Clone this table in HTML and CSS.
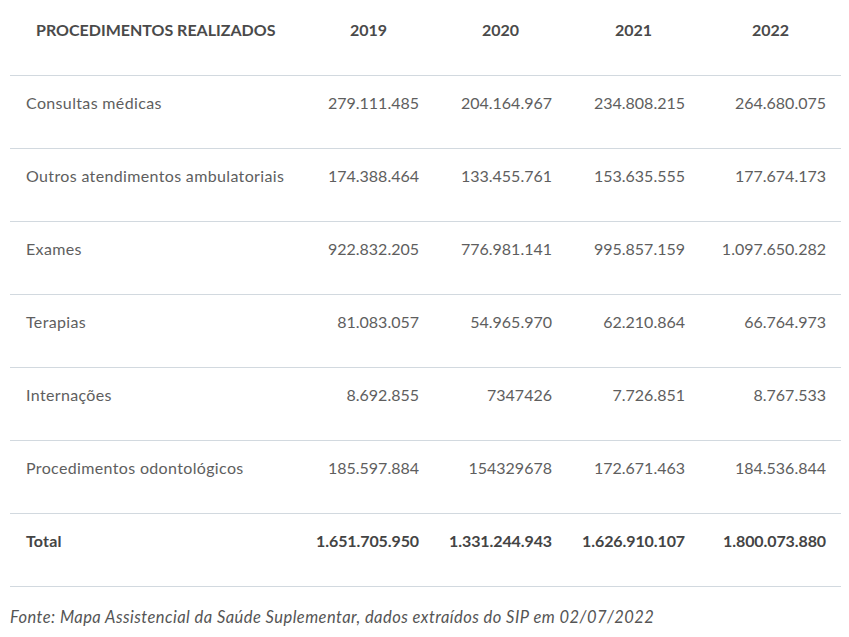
FILE: index.html
```html
<!DOCTYPE html>
<html lang="pt-BR">
<head>
<meta charset="utf-8">
<link rel="stylesheet" href="styles.css">
</head>
<body>
<div class="wrap">
<table class="data">
  <colgroup>
    <col class="c-label"><col class="c-num2"><col class="c-num"><col class="c-num"><col class="c-num5">
  </colgroup>
  <thead>
    <tr><th class="lbl">PROCEDIMENTOS REALIZADOS</th><th>2019</th><th>2020</th><th>2021</th><th>2022</th></tr>
  </thead>
  <tbody>
    <tr><td class="lbl">Consultas médicas</td><td>279.111.485</td><td>204.164.967</td><td>234.808.215</td><td>264.680.075</td></tr>
    <tr><td class="lbl">Outros atendimentos ambulatoriais</td><td>174.388.464</td><td>133.455.761</td><td>153.635.555</td><td>177.674.173</td></tr>
    <tr><td class="lbl">Exames</td><td>922.832.205</td><td>776.981.141</td><td>995.857.159</td><td>1.097.650.282</td></tr>
    <tr><td class="lbl">Terapias</td><td>81.083.057</td><td>54.965.970</td><td>62.210.864</td><td>66.764.973</td></tr>
    <tr><td class="lbl">Internações</td><td>8.692.855</td><td>7347426</td><td>7.726.851</td><td>8.767.533</td></tr>
    <tr><td class="lbl">Procedimentos odontológicos</td><td>185.597.884</td><td>154329678</td><td>172.671.463</td><td>184.536.844</td></tr>
    <tr class="total"><td class="lbl">Total</td><td>1.651.705.950</td><td>1.331.244.943</td><td>1.626.910.107</td><td>1.800.073.880</td></tr>
  </tbody>
</table>
<p class="source">Fonte: Mapa Assistencial da Saúde Suplementar, dados extraídos do SIP em 02/07/2022</p>
</div>
</body>
</html>
```
FILE: styles.css
```css
html, body { margin: 0; padding: 0; background: #fff; }
body { font-family: Lato, "Open Sans", sans-serif; color: #555; }
.wrap { padding: 0 8px 0 10px; }
.data { width: 831px; border-collapse: collapse; table-layout: fixed; }
.c-label { width: 293px; }
.c-num2 { width: 131px; }
.c-num { width: 133px; }
.c-num5 { width: 141px; }
.data th {
  height: 75px; box-sizing: border-box; padding: 21px 15px 36px;
  font-size: 16px; font-weight: 700; color: #4a4a4a; text-align: center;
  border-bottom: 1px solid #d2d9df; line-height: 18px; vertical-align: top;
}
.data th.lbl { text-align: left; padding-left: 26px; padding-right: 0; }
.data td {
  height: 73px; box-sizing: border-box; padding: 17px 15px 0 0;
  font-size: 16px; font-weight: 400; color: #5e5e5e; text-align: right;
  border-bottom: 1px solid #d2d9df; line-height: 20px; vertical-align: top;
}
.data td.lbl { text-align: left; padding-left: 16px; padding-right: 0; letter-spacing: 0.35px; }
.data tr.total td { font-weight: 700; color: #444; letter-spacing: -0.1px; }
.data tr.total td.lbl { letter-spacing: 0.2px; }
.source {
  margin: 20px 0 0; font-size: 16.5px; font-style: italic; color: #555; line-height: 20px;
  letter-spacing: 0.45px;
}
```
